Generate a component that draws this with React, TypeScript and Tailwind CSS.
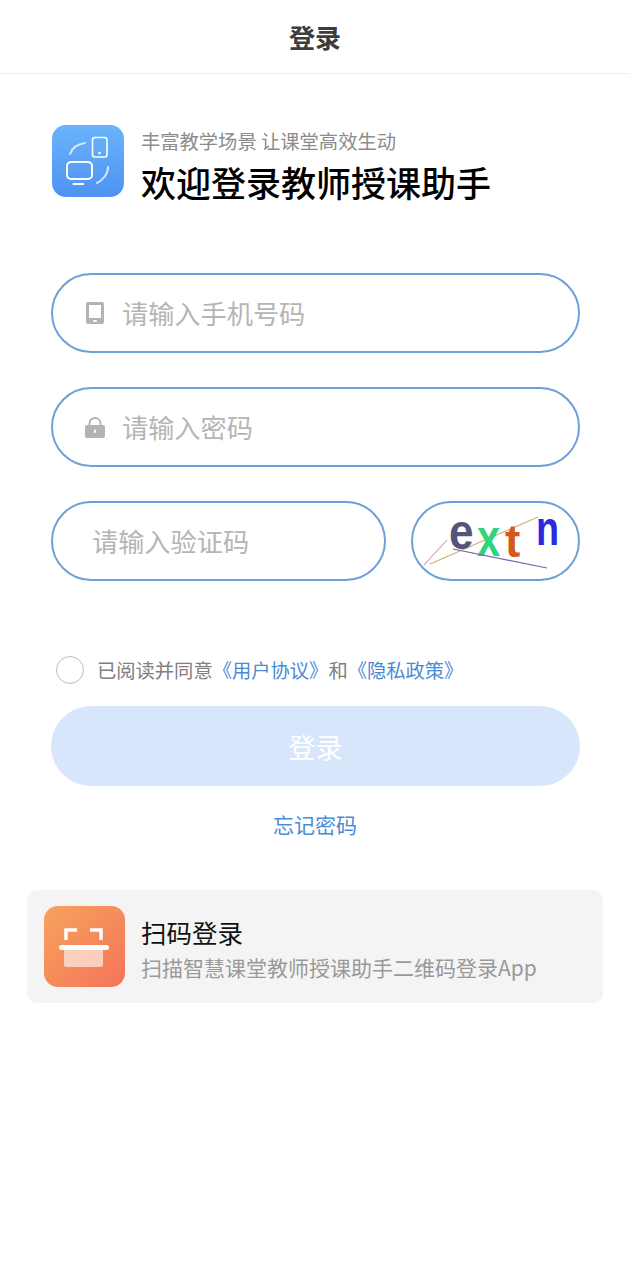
import React from "react";

const AppLogo: React.FC = () => (
    <div className="w-[72px] h-[72px] rounded-[14px] bg-gradient-to-b from-[#69b4fb] to-[#4f92f3] shrink-0">
        <svg width="72" height="72" viewBox="0 0 72 72" fill="none">
            <rect x="40.5" y="12.5" width="14.5" height="19.5" rx="2.5" stroke="#fff" strokeWidth="1.6" />
            <circle cx="47.5" cy="28" r="1.3" fill="#fff" />
            <rect x="15" y="37" width="25" height="17" rx="4" stroke="#fff" strokeWidth="2" />
            <path d="M21.5 59H31" stroke="#fff" strokeWidth="2.2" strokeLinecap="round" />
            <path d="M18 29C20 23 26 19 33 18" stroke="#d5e7fd" strokeWidth="2" strokeLinecap="round" />
            <path d="M56 42C56 49 51 55 45 58" stroke="#d5e7fd" strokeWidth="2" strokeLinecap="round" />
        </svg>
    </div>
);

const PhoneIcon: React.FC = () => (
    <svg width="18" height="22" viewBox="0 0 18 22" fill="none">
        <path fillRule="evenodd" clipRule="evenodd" d="M2 0H16C17.1 0 18 .9 18 2V20C18 21.1 17.1 22 16 22H2C.9 22 0 21.1 0 20V2C0 .9.9 0 2 0ZM3 3V16H15V3H3Z" fill="#b3b3b3" />
        <rect x="7" y="18" width="4" height="2" rx="1" fill="#fff" />
    </svg>
);

const LockIcon: React.FC = () => (
    <svg width="20" height="21" viewBox="0 0 20 21" fill="none">
        <path d="M4.5 10V6.5C4.5 3.2 6.9 1 10 1C13.1 1 15.5 3.2 15.5 6.5V10" stroke="#b3b3b3" strokeWidth="1.8" />
        <rect x="0" y="8" width="20" height="13" rx="2" fill="#b3b3b3" />
        <rect x="9" y="12.5" width="2" height="3.5" rx="1" fill="#fff" />
    </svg>
);

const Captcha: React.FC = () => (
    <div className="w-[169px] h-[80px] rounded-[40px] border-2 border-[#6f9fd8] shrink-0">
        <svg width="165" height="76" viewBox="0 0 165 76" className="overflow-visible" fontFamily="Liberation Sans, sans-serif" fontWeight="bold">
            <line x1="11" y1="62" x2="34" y2="37" stroke="#e0b4c0" strokeWidth="1.2" />
            <line x1="17" y1="61" x2="125" y2="14" stroke="#cdb46e" strokeWidth="1.2" />
            <text transform="translate(36 46) scale(.85 .97)" fontSize="52" fill="#54547c">e</text>
            <text transform="translate(64 53) scale(.8 1.03)" fontSize="52" fill="#2fd47e">x</text>
            <text transform="translate(92 54) scale(1 1)" fontSize="46" fill="#d4591c">t</text>
            <text transform="translate(123 42) scale(.82 1.06)" fontSize="46" fill="#2a2ae0">n</text>
            <line x1="40" y1="46" x2="134" y2="65" stroke="#6b6ba8" strokeWidth="1.2" />
        </svg>
    </div>
);

const ScanLogo: React.FC = () => (
    <div className="w-[81px] h-[81px] rounded-[14px] bg-gradient-to-br from-[#f6a35c] to-[#f4735a] shrink-0">
        <svg width="81" height="81" viewBox="0 0 81 81" fill="none">
            <path d="M22 34V24H33" stroke="#fff" strokeWidth="3.5" />
            <path d="M46 24H57V34" stroke="#fff" strokeWidth="3.5" />
            <rect x="15" y="39" width="50" height="5" rx="2.5" fill="#fff" />
            <path d="M20 44H59V59C59 60.1 58.1 61 57 61H22C20.9 61 20 60.1 20 59V44Z" fill="#fff" fillOpacity="0.6" />
        </svg>
    </div>
);

const InputBox: React.FC<{ icon?: React.ReactNode, placeholder: string, className?: string }> = ({ icon, placeholder, className }) => {
    return (<div className={`h-[80px] rounded-[40px] border-2 border-[#6f9fd8] flex items-center ${className}`}>
        {icon && <div className="w-[20px] ml-[32px] mr-[17px] flex justify-center">{icon}</div>}
        <div className={`text-[26.2px] pt-[2px] text-[#b5b5b5] ${icon ? "" : "ml-[39px]"}`}>{placeholder}</div>
    </div>);
}

const App: React.FC = () => {
    return (
        <div className="w-[630px] h-[1280px] bg-white overflow-hidden font-['Noto_Sans_CJK_SC',sans-serif]">
            <div className="h-[74px] border-b border-[#eeeeee] flex items-center justify-center text-[26px] font-bold text-[#3d3d3d]">登录</div>

            <div className="flex items-start gap-[17px] pl-[52px] pr-[50px] mt-[51px]">
                <AppLogo />
                <div className="flex flex-col mt-[2px]">
                    <div className="text-[19.3px] leading-[28px] text-[#8c8c8c]">丰富教学场景 让课堂高效生动</div>
                    <div className="text-[35px] leading-[54px] font-medium text-black">欢迎登录教师授课助手</div>
                </div>
            </div>

            <div className="flex flex-col gap-[34px] pl-[51px] pr-[50px] mt-[64px]">
                <InputBox icon={<PhoneIcon />} placeholder="请输入手机号码" />
                <InputBox icon={<LockIcon />} placeholder="请输入密码" />
                <div className="flex justify-between">
                    <InputBox placeholder="请输入验证码" className="w-[335px]" />
                    <Captcha />
                </div>
            </div>

            <div className="flex items-center pl-[56px] mt-[75px] text-[19.3px] text-[#808080]">
                <div className="w-[28px] h-[28px] rounded-full border border-[#bdbdbd] mr-[13px]"></div>
                <span>已阅读并同意</span>
                <span className="text-[#4a8bd6]">《用户协议》</span>
                <span>和</span>
                <span className="text-[#4a8bd6]">《隐私政策》</span>
            </div>

            <div className="ml-[51px] mr-[50px] mt-[21px] h-[80px] rounded-[40px] bg-[#d8e6fc] flex items-center justify-center text-[27px] pt-[2px] text-white">登录</div>

            <div className="mt-[22px] text-center text-[21px] leading-[32px] text-[#4a8bd6]">忘记密码</div>

            <div className="mx-[27px] mt-[50px] h-[113px] rounded-[10px] bg-[#f4f4f4] flex items-center px-[17px] gap-[16px]">
                <ScanLogo />
                <div className="flex flex-col mt-[1px]">
                    <div className="text-[25.5px] leading-[40px] text-[#111111]">扫码登录</div>
                    <div className="text-[21px] leading-[30px] text-[#999999]">扫描智慧课堂教师授课助手二维码登录App</div>
                </div>
            </div>
        </div>
    );
};

export default App;
